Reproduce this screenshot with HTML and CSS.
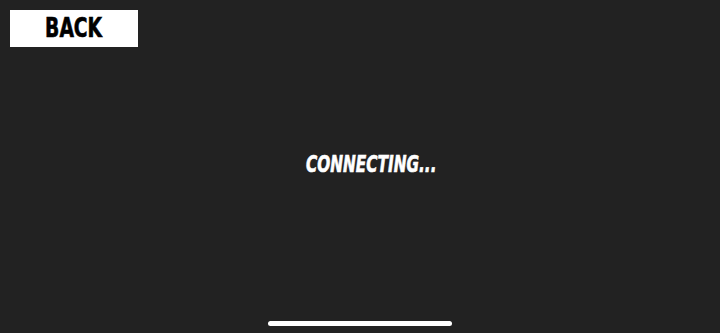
FILE: index.html
```html
<!DOCTYPE html>
<html>
<head>
    <title>Connecting</title>
    <link rel="stylesheet" href="styles.css">
</head>
<body>
    <div class="screen">
        <div class="top-bar">
            <button class="back-btn"><span class="condensed">BACK</span></button>
        </div>
        <div class="status">
            <span class="status-text condensed">CONNECTING...</span>
        </div>
        <div class="home-bar"><div class="home-indicator"></div></div>
    </div>
</body>
</html>
```

FILE: styles.css
```css
body {
    margin: 0;
    background: #222222;
    font-family: "DejaVu Sans Condensed", "DejaVu Sans", sans-serif;
}
.screen {
    height: 333px;
    display: flex;
    flex-direction: column;
}
.top-bar {
    padding: 10px 0 0 10px;
}
.condensed {
    display: inline-block;
    transform: scaleX(0.74);
    -webkit-text-stroke: 0.6px currentColor;
}
.back-btn {
    width: 128px;
    height: 37px;
    background: #ffffff;
    color: #000000;
    border: none;
    padding: 0;
    font-family: inherit;
    font-weight: bold;
    font-size: 26px;
    line-height: 37px;
    cursor: pointer;
    display: block;
}
.back-btn .condensed {
    transform: scaleX(0.8);
}
.status {
    flex: 1;
    display: flex;
    align-items: center;
    justify-content: center;
    padding-left: 22px;
    padding-bottom: 40px;
}
.status-text {
    color: #ffffff;
    font-weight: bold;
    font-style: italic;
    font-size: 23px;
}
.home-bar {
    height: 12px;
    display: flex;
    justify-content: center;
}
.home-indicator {
    width: 184px;
    height: 5px;
    border-radius: 3px;
    background: #ffffff;
}
```
